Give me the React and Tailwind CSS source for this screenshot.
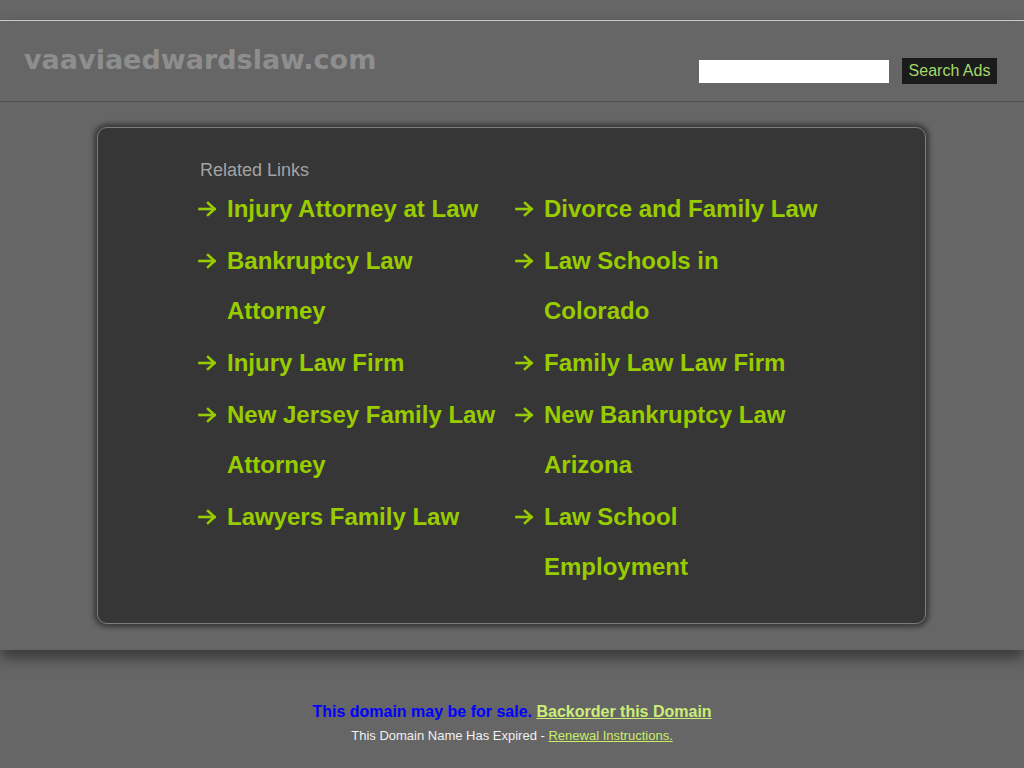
const leftLinks = [
  "Injury Attorney at Law",
  "Bankruptcy Law Attorney",
  "Injury Law Firm",
  "New Jersey Family Law Attorney",
  "Lawyers Family Law",
];

const rightLinks = [
  "Divorce and Family Law",
  "Law Schools in Colorado",
  "Family Law Law Firm",
  "New Bankruptcy Law Arizona",
  "Law School Employment",
];

const Arrow = () => (
  <svg width="19" height="16" viewBox="0 0 19 16" fill="none" stroke="#99cc00" strokeWidth="2.6" strokeLinecap="square">
    <path d="M1.5 8h15" />
    <path d="M10 2l6.5 6-6.5 6" />
  </svg>
);

const LinkItem = ({ text }) => (
  <div className="flex items-start">
    <div className="w-[29px] h-[50px] flex items-center">
      <Arrow />
    </div>
    <a href="#" className="w-[280px] text-[24px] leading-[50px] font-bold text-[#99cc00]">
      {text}
    </a>
  </div>
);

export default function App() {
  const rows = leftLinks.map((l, i) => [l, rightLinks[i]]);

  return (
    <div className="min-h-screen bg-[#666666] font-['Liberation_Sans',Arial,sans-serif]">
      <div className="h-[20px]" />
      <div className="relative z-10 bg-[#666666] border-t border-[#c8c8c8] shadow-[0_8px_14px_rgba(0,0,0,0.45)]">
        {/* header */}
        <div className="h-[80px] flex justify-between border-b border-[#505050] box-content">
          <div className="pl-[24px] pt-[23px] text-[27px] leading-[32px] font-bold text-[#8e8e8e] font-['DejaVu_Sans',Verdana,sans-serif]">
            vaaviaedwardslaw.com
          </div>
          <div className="pt-[37px] pr-[27px] flex items-center gap-[13px] h-fit">
            <input type="text" className="w-[190px] h-[23px] bg-white outline-none" />
            <button className="w-[95px] h-[26px] bg-[#1b1b1b] text-[#a3d86a] text-[16px] leading-[26px]">
              Search Ads
            </button>
          </div>
        </div>

        {/* body */}
        <div className="pt-[25px] pb-[26px] pl-[97px]">
          <div className="w-[829px] rounded-[10px] border border-[#7c7c7c] bg-[#363636] shadow-[0_0_5px_3px_rgba(0,0,0,0.45)] pl-[100px] pt-[31px] pb-[31px]">
            <div className="pl-[2px] text-[18px] leading-[22px] text-[#a3a3a3] mb-[3px]">Related Links</div>
            <div className="grid grid-cols-[317px_317px] gap-y-[2px]">
              {rows.map(([l, r]) => (
                <div key={l} className="contents">
                  <LinkItem text={l} />
                  <LinkItem text={r} />
                </div>
              ))}
            </div>
          </div>
        </div>
      </div>

      {/* footer */}
      <div className="pt-[52px] text-center">
        <div className="text-[16px] leading-[20px] font-bold">
          <span className="text-[#0000ff]">This domain may be for sale. </span>
          <a href="#" className="text-[#ccee77] underline">Backorder this Domain</a>
        </div>
        <div className="mt-[6px] text-[13px] leading-[16px] text-[#f0f0f0]">
          This Domain Name Has Expired - <a href="#" className="text-[#ccee66] underline">Renewal Instructions.</a>
        </div>
      </div>
    </div>
  );
}
